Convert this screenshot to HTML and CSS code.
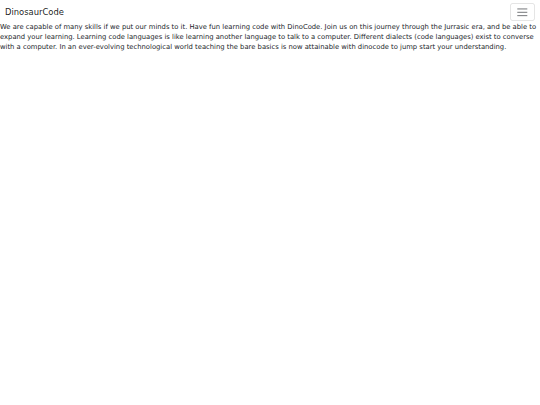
FILE: index.html
```html
<!DOCTYPE html>
<html lang="en">
<head>
<meta charset="utf-8">
<title>DinosaurCode</title>
<link rel="stylesheet" href="styles.css">
</head>
<body>
<nav class="navbar">
  <div class="nav-inner">
    <a class="brand" href="#">DinosaurCode</a>
    <button class="toggler" type="button" aria-label="Toggle navigation">
      <svg class="toggler-icon" viewBox="0 0 30 30" xmlns="http://www.w3.org/2000/svg"><path stroke="rgba(33,37,41,0.75)" stroke-linecap="round" stroke-miterlimit="10" stroke-width="2" d="M4 7h22M4 15h22M4 23h22"/></svg>
    </button>
  </div>
</nav>
<p class="intro">We are capable of many skills if we put our minds to it. Have fun learning code with DinoCode. Join us on this journey through the Jurrasic era, and be able to expand your learning. Learning code languages is like learning another language to talk to a computer. Different dialects (code languages) exist to converse with a computer. In an ever-evolving technological world teaching the bare basics is now attainable with dinocode to jump start your understanding.</p>
</body>
</html>
```
FILE: styles.css
```css
html, body {
  margin: 0;
  padding: 0;
  background: #fff;
}
body {
  font-family: "DejaVu Sans", sans-serif;
  font-size: 6.8px;
  line-height: 10px;
  color: #212529;
}
.navbar {
  padding: 3px 0 0;
}
.nav-inner {
  display: flex;
  align-items: center;
  justify-content: space-between;
  padding: 0 5.04px;
}
.brand {
  font-size: 8.4px;
  line-height: 12.6px;
  padding: 2.1px 0;
  color: rgba(0, 0, 0, 0.9);
  text-decoration: none;
}
.toggler {
  display: flex;
  padding: 1.68px 5.04px;
  background: transparent;
  border: 0.5px solid rgba(0, 0, 0, 0.1);
  border-radius: 2.5px;
  margin: 0;
}
.toggler-icon {
  width: 12.6px;
  height: 12.6px;
  display: block;
}
.intro {
  margin: 1px 0 6.72px;
}
```
